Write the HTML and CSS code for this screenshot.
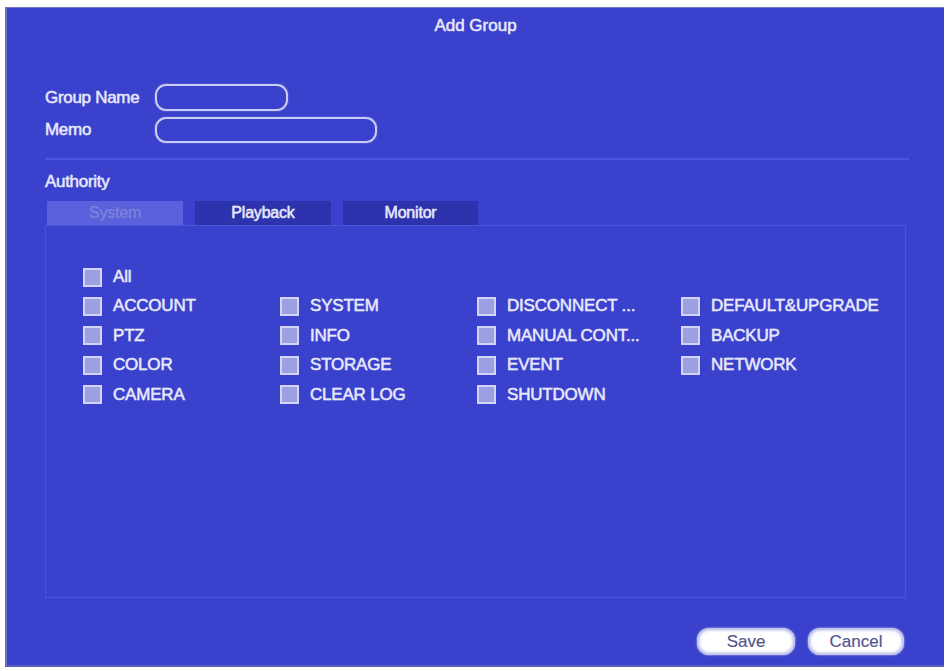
FILE: index.html
```html
<!DOCTYPE html>
<html lang="en">
<head>
    <meta charset="UTF-8">
    <meta name="viewport" content="width=device-width, initial-scale=1.0">
    <title>Add Group</title>
    <link rel="stylesheet" href="styles.css">
</head>
<body>
    <div class="dialog">
        <div class="title">Add Group</div>

        <div class="form">
            <div class="form-row">
                <label class="label">Group Name</label>
                <div class="input short"></div>
            </div>
            <div class="form-row memo">
                <label class="label">Memo</label>
                <div class="input long"></div>
            </div>
        </div>

        <div class="divider"></div>

        <div class="section-title">Authority</div>

        <div class="tabs">
            <div class="tab active">System</div>
            <div class="tab">Playback</div>
            <div class="tab">Monitor</div>
        </div>

        <div class="panel">
            <div class="grid">
                <div class="item"><span class="box"></span>All</div>
                <div class="item"></div>
                <div class="item"></div>
                <div class="item"></div>

                <div class="item"><span class="box"></span>ACCOUNT</div>
                <div class="item"><span class="box"></span>SYSTEM</div>
                <div class="item"><span class="box"></span>DISCONNECT ...</div>
                <div class="item"><span class="box"></span>DEFAULT&amp;UPGRADE</div>

                <div class="item"><span class="box"></span>PTZ</div>
                <div class="item"><span class="box"></span>INFO</div>
                <div class="item"><span class="box"></span>MANUAL CONT...</div>
                <div class="item"><span class="box"></span>BACKUP</div>

                <div class="item"><span class="box"></span>COLOR</div>
                <div class="item"><span class="box"></span>STORAGE</div>
                <div class="item"><span class="box"></span>EVENT</div>
                <div class="item"><span class="box"></span>NETWORK</div>

                <div class="item"><span class="box"></span>CAMERA</div>
                <div class="item"><span class="box"></span>CLEAR LOG</div>
                <div class="item"><span class="box"></span>SHUTDOWN</div>
                <div class="item"></div>
            </div>
        </div>

        <div class="footer">
            <button class="button save">Save</button>
            <button class="button cancel">Cancel</button>
        </div>
    </div>
</body>
</html>
```

FILE: styles.css
```css
* {
    box-sizing: border-box;
    margin: 0;
    padding: 0;
    font-family: 'Liberation Sans', Arial, sans-serif;
}

body {
    background-color: #ffffff;
    width: 948px;
    height: 671px;
    overflow: hidden;
}

.dialog {
    width: 939px;
    height: 660px;
    margin: 7px 0 0 5px;
    background-color: #3a41cc;
    border-top: 1px solid #6f74c8;
    border-left: 2px solid #6a70c4;
    border-bottom: 2px solid #5a5fb8;
    display: flex;
    flex-direction: column;
    padding: 0 35px 0 38px;
    color: #e6e8fa;
    font-size: 17px;
    -webkit-text-stroke: 0.35px #e6e8fa;
    text-shadow: 0 0 1px rgba(230, 232, 250, 0.6);
}

.title {
    text-align: center;
    line-height: 20px;
    padding-top: 8px;
    margin-right: -35px;
    margin-left: -38px;
}

.form {
    margin-top: 48px;
    display: flex;
    flex-direction: column;
    gap: 6px;
}

.form-row {
    display: flex;
    align-items: center;
    height: 27px;
}

.form-row.memo {
    height: 26px;
}

.label {
    width: 110px;
    letter-spacing: -0.3px;
}

.input {
    height: 100%;
    border: 2px solid #c9ccf4;
    border-radius: 11px;
    box-shadow: 0 0 2px rgba(200, 204, 244, 0.5);
}

.input.short {
    width: 133px;
}

.input.long {
    width: 222px;
}

.divider {
    height: 2px;
    background-color: #4d55e0;
    margin-top: 15px;
}

.section-title {
    margin-top: 12px;
    line-height: 20px;
    letter-spacing: -0.3px;
}

.tabs {
    margin-top: 9px;
    display: flex;
    height: 24px;
    padding-left: 2px;
}

.tab {
    width: 136px;
    margin-right: 12px;
    background-color: #2d32ad;
    text-align: center;
    line-height: 24px;
    font-size: 16px;
    letter-spacing: -0.2px;
}

.tab:last-child {
    width: 135px;
}

.tab.active {
    background-color: #5a61dd;
    color: #7f86d8;
    -webkit-text-stroke: 0.2px #7f86d8;
    text-shadow: none;
}

.panel {
    height: 373px;
    width: 861px;
    border: 1px solid #4c54dc;
    padding: 41px 0 0 37px;
}

.grid {
    display: grid;
    grid-template-columns: 197px 197px 204px 200px;
    grid-auto-rows: 29.4px;
}

.item {
    display: flex;
    align-items: center;
    gap: 11px;
    height: 20px;
    white-space: nowrap;
    letter-spacing: -0.2px;
}

.box {
    width: 19px;
    height: 19px;
    background-color: #9ca0e2;
    border: 2px solid #d2d5f6;
    flex-shrink: 0;
}

.footer {
    display: flex;
    justify-content: flex-end;
    gap: 13px;
    margin-top: 30px;
    padding-right: 5px;
}

.button {
    height: 27px;
    border-radius: 12px;
    background-color: #ffffff;
    border: 2px solid #c4c7ee;
    box-shadow: inset 0 0 3px #aeb2e8, 0 0 2px #d8dbf8;
    color: #55558f;
    font-size: 17px;
    -webkit-text-stroke: 0.2px #55558f;
    text-shadow: none;
}

.button.save {
    width: 98px;
}

.button.cancel {
    width: 96px;
}
```
